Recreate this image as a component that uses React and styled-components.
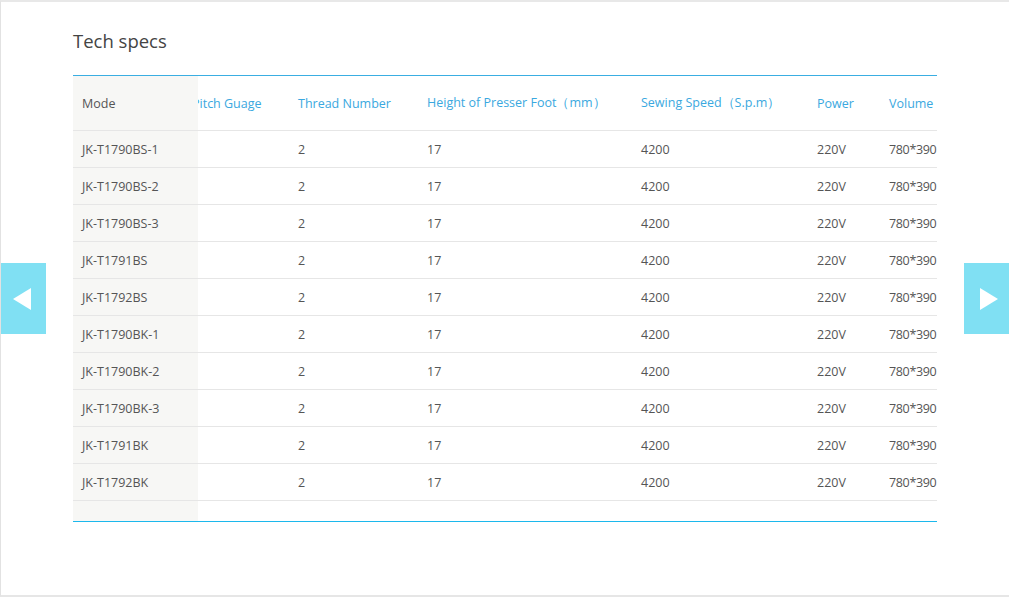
import React, { useLayoutEffect, useRef } from "react";
import styled, { createGlobalStyle } from "styled-components";

const GlobalStyle = createGlobalStyle`
  html, body { margin: 0; padding: 0; background: #fff; overflow: hidden; }
  body { font-family: "Microsoft YaHei", "Open Sans", "Noto Sans", sans-serif; }
`;

const Card = styled.div`
  position: relative;
  box-sizing: border-box;
  width: 1030px;
  height: 597px;
  border-top: 2px solid #e8e8e8;
  border-left: 1px solid #e2e2e2;
  border-bottom: 2px solid #e6e6e6;
  padding: 0 72px;
`;

const Title = styled.h2`
  margin: 0;
  padding-top: 26px;
  height: 47px;
  font-size: 18.5px;
  font-weight: 400;
  color: #444;
  line-height: 26px;
`;

const TableFrame = styled.div`
  position: relative;
  width: 864px;
  border-top: 1px solid #3aaee2;
  border-bottom: 1px solid #1cb8ec;
`;

const ScrollArea = styled.div`
  overflow: hidden;
  padding-bottom: 20px;
`;

const Table = styled.table`
  border-collapse: collapse;
  table-layout: fixed;
  width: ${(p) => p.$width}px;
`;

const Th = styled.th`
  height: 54px;
  padding: 0 0 0 9px;
  text-align: left;
  font-weight: 400;
  font-size: 12.5px;
  white-space: nowrap;
  color: ${(p) => (p.$muted ? "#555" : "#3aa8e0")};
  border-bottom: 1px solid #e6e6e6;
`;

const Td = styled.td`
  height: 36px;
  padding: 0 0 0 9px;
  font-size: 12.5px;
  letter-spacing: ${(p) => (p.$tight ? "-0.35px" : "0")};
  color: #555;
  white-space: nowrap;
  overflow: hidden;
  border-bottom: 1px solid #e6e6e6;
`;

const FixedColumn = styled.div`
  position: absolute;
  top: 0;
  left: 0;
  bottom: 0;
  width: 125px;
  background: #f7f7f5;
`;

const NavButton = styled.button`
  position: absolute;
  top: 261px;
  ${(p) => (p.$side === "left" ? "left: 0; padding: 0 4px 0 0;" : "left: 963px; padding: 0 0 0 4px;")}
  width: 45px;
  height: 71px;
  border: 0;
  background: #80e0f3;
  display: flex;
  align-items: center;
  justify-content: center;
  cursor: pointer;
`;

const columns = [
  { key: "mode", label: "Mode", width: 125, covered: true },
  { key: "pitch", label: "Pitch Guage", width: 106 },
  { key: "thread", label: "Thread Number", width: 129 },
  { key: "height", label: "Height of Presser Foot（mm）", width: 214 },
  { key: "speed", label: "Sewing Speed（S.p.m）", width: 176 },
  { key: "power", label: "Power", width: 72 },
  { key: "volume", label: "Volume", width: 110, tight: true },
];

const models = [
  "JK-T1790BS-1",
  "JK-T1790BS-2",
  "JK-T1790BS-3",
  "JK-T1791BS",
  "JK-T1792BS",
  "JK-T1790BK-1",
  "JK-T1790BK-2",
  "JK-T1790BK-3",
  "JK-T1791BK",
  "JK-T1792BK",
];

const rows = models.map((m) => ({
  mode: m,
  pitch: "",
  thread: "2",
  height: "17",
  speed: "4200",
  power: "220V",
  volume: "780*390",
}));

const totalWidth = columns.reduce((s, c) => s + c.width, 0);

function Arrow({ dir }) {
  return (
    <svg width="18" height="22" viewBox="0 0 18 22">
      {dir === "left" ? (
        <polygon points="0,11 18,0 18,22" fill="#fff" />
      ) : (
        <polygon points="18,11 0,0 0,22" fill="#fff" />
      )}
    </svg>
  );
}

export default function App() {
  const scrollRef = useRef(null);
  useLayoutEffect(() => {
    if (scrollRef.current) scrollRef.current.scrollLeft = 15;
  }, []);

  return (
    <>
      <GlobalStyle />
      <Card>
        <Title>Tech specs</Title>
        <TableFrame>
          <ScrollArea ref={scrollRef}>
            <Table $width={totalWidth}>
              <colgroup>
                {columns.map((c) => (
                  <col key={c.key} style={{ width: c.width }} />
                ))}
              </colgroup>
              <thead>
                <tr>
                  {columns.map((c) => (
                    <Th key={c.key} $muted={c.key === "mode"}>
                      {c.covered ? "" : c.label}
                    </Th>
                  ))}
                </tr>
              </thead>
              <tbody>
                {rows.map((r) => (
                  <tr key={r.mode}>
                    {columns.map((c) => (
                      <Td key={c.key} $tight={c.tight}>
                        {c.covered ? "" : r[c.key]}
                      </Td>
                    ))}
                  </tr>
                ))}
              </tbody>
            </Table>
          </ScrollArea>
          <FixedColumn>
            <Table $width={125}>
              <thead>
                <tr>
                  <Th $muted>Mode</Th>
                </tr>
              </thead>
              <tbody>
                {rows.map((r) => (
                  <tr key={r.mode}>
                    <Td>{r.mode}</Td>
                  </tr>
                ))}
              </tbody>
            </Table>
          </FixedColumn>
        </TableFrame>
        <NavButton $side="left" aria-label="Previous">
          <Arrow dir="left" />
        </NavButton>
        <NavButton $side="right" aria-label="Next">
          <Arrow dir="right" />
        </NavButton>
      </Card>
    </>
  );
}
